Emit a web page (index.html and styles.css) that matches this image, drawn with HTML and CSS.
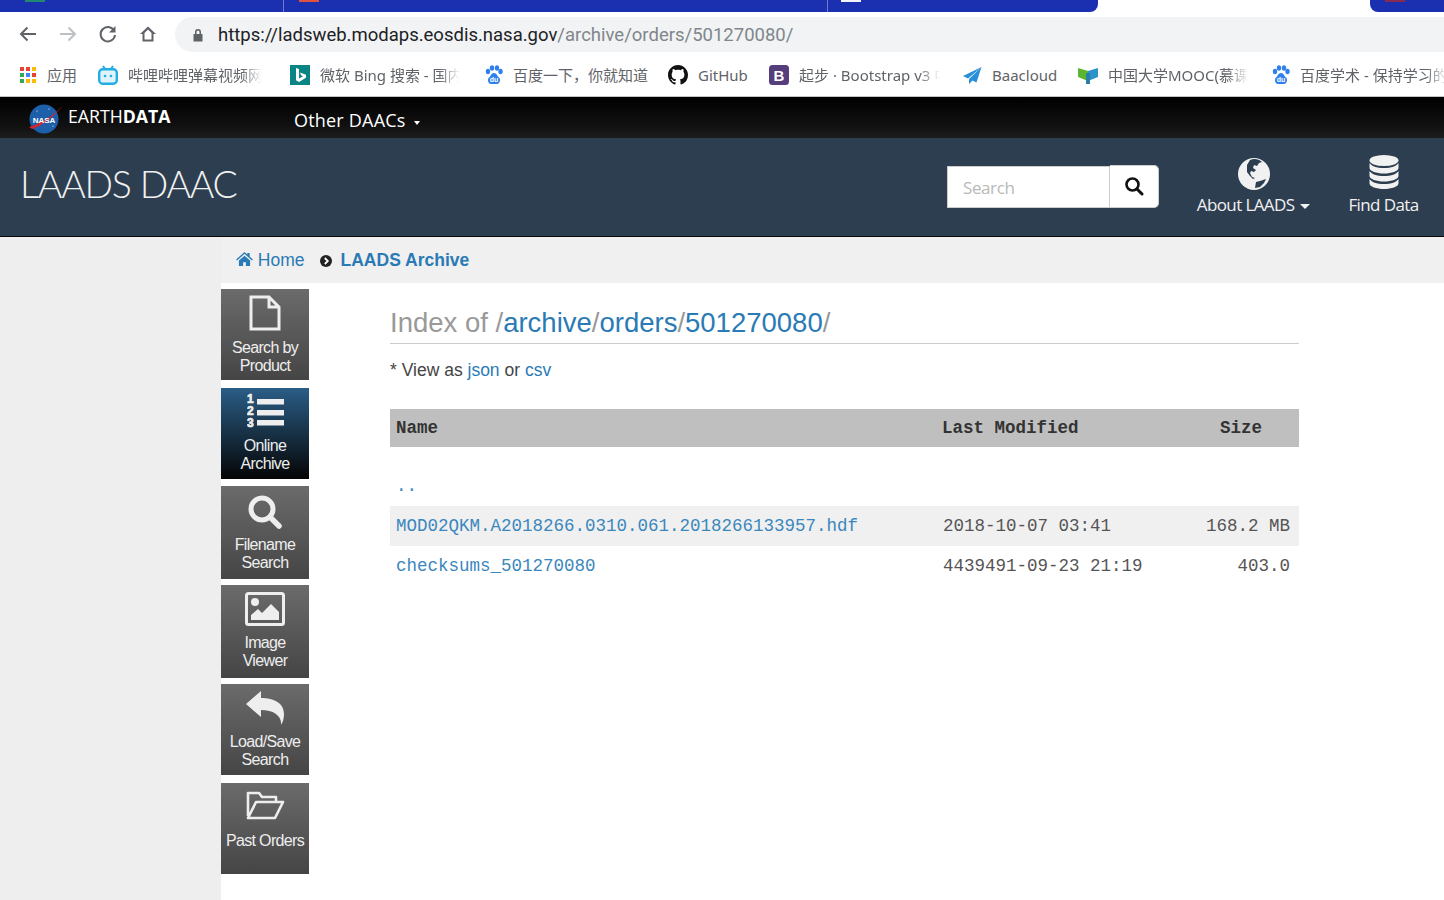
FILE: index.html
```html
<!DOCTYPE html>
<html lang="en">
<head>
<meta charset="utf-8">
<title>LAADS DAAC</title>
<link rel="stylesheet" href="styles.css">
</head>
<body>
<div class="browser">
  <div class="tabstrip">
    <div class="tabs">
      <div class="tab tab-a"><i class="fav fav-green"></i></div>
      <div class="tab tab-b"><i class="fav fav-red"></i></div>
      <div class="tab tab-c"><i class="fav fav-white"></i></div>
    </div>
    <div class="tab-active"></div>
    <div class="tabs-right"><i class="fav fav-maroon"></i></div>
  </div>
  <div class="toolbar">
    <svg class="tool" viewBox="0 0 20 20"><path d="M18 10H3M9.500 3.500 3 10l6.500 6.500" fill="none" stroke="#5f6368" stroke-width="2"/></svg>
    <svg class="tool" viewBox="0 0 20 20"><path d="M2 10h15M10.500 3.500 17 10l-6.500 6.500" fill="none" stroke="#bdc1c6" stroke-width="2"/></svg>
    <svg class="tool" viewBox="0 0 20 20"><path d="M16 6.500A7.200 7.200 0 1 0 17 11" fill="none" stroke="#5f6368" stroke-width="2"/><path d="M17.500 2v6.500H11z" fill="#5f6368"/></svg>
    <svg class="tool tool-last" viewBox="0 0 20 20"><path d="M10 2.500 2 10h2.500v7.500h11V10H18zM6.500 15.500V9L10 5.500 13.500 9v6.500z" fill="#5f6368"/></svg>
    <div class="omnibox">
      <svg class="lock" viewBox="0 0 12 14"><path d="M3 6V4a3 3 0 0 1 6 0v2h1.500v7.500h-9V6zm1.500 0h3V4a1.500 1.500 0 0 0-3 0z" fill="#5f6368"/></svg>
      <span class="url"><span class="url-host">https://ladsweb.modaps.eosdis.nasa.gov</span>/archive/orders/501270080/</span>
    </div>
  </div>
  <div class="bookmarks">
    <a class="bm bm-apps"><svg class="bm-icon" viewBox="0 0 16 16"><g><rect x="0" y="0" width="4" height="4" fill="#ea4335"/><rect x="6" y="0" width="4" height="4" fill="#ea4335"/><rect x="12" y="0" width="4" height="4" fill="#fbbc05"/><rect x="0" y="6" width="4" height="4" fill="#34a853"/><rect x="6" y="6" width="4" height="4" fill="#4285f4"/><rect x="12" y="6" width="4" height="4" fill="#ea4335"/><rect x="0" y="12" width="4" height="4" fill="#34a853"/><rect x="6" y="12" width="4" height="4" fill="#fbbc05"/><rect x="12" y="12" width="4" height="4" fill="#fbbc05"/></g></svg><span class="bm-text">应用</span></a>
    <a class="bm bm-bili"><svg class="bm-icon" viewBox="0 0 20 20"><path d="M5 1l2.500 3.500M15 1l-2.500 3.500" stroke="#23ade5" stroke-width="2"/><rect x="1.200" y="4.200" width="17.600" height="14.600" rx="3.500" fill="#dff3fb" stroke="#23ade5" stroke-width="2.400"/><circle cx="7" cy="11" r="1.300" fill="#23ade5"/><circle cx="13" cy="11" r="1.300" fill="#23ade5"/></svg><span class="bm-text bm-fade">哔哩哔哩弹幕视频网</span></a>
    <a class="bm bm-bing"><svg class="bm-icon" viewBox="0 0 20 20"><rect width="20" height="20" fill="#0b8484"/><path d="M6 3l3 1v9.500l4-2.300-2-1-1-2.700 6 2.200v3L9 17l-3-1.700z" fill="#fff"/></svg><span class="bm-text bm-fade">微软 Bing 搜索 - 国内</span></a>
    <a class="bm bm-baidu1"><svg class="bm-icon bm-icon-paw" viewBox="0 0 20 20"><use href="#paw"/><text x="10" y="16.500" class="du">du</text></svg><span class="bm-text">百度一下，你就知道</span></a>
    <a class="bm bm-gh"><svg class="bm-icon" viewBox="0 0 16 16"><path fill-rule="evenodd" fill="#111" d="M8 0C3.580 0 0 3.580 0 8c0 3.540 2.290 6.530 5.470 7.590.4.070.55-.17.55-.38 0-.19-.01-.82-.01-1.490-2.010.37-2.530-.49-2.690-.94-.09-.23-.48-.94-.82-1.130-.28-.15-.68-.52-.01-.53.630-.01 1.080.58 1.230.82.720 1.210 1.870.87 2.330.66.070-.52.280-.87.510-1.070-1.780-.2-3.640-.89-3.640-3.950 0-.87.310-1.590.82-2.150-.08-.2-.36-1.020.08-2.120 0 0 .67-.21 2.200.82.640-.18 1.320-.27 2-.27s1.360.09 2 .27c1.530-1.040 2.200-.82 2.200-.82.44 1.100.16 1.920.08 2.120.51.560.82 1.270.82 2.150 0 3.070-1.870 3.750-3.650 3.950.29.250.54.730.54 1.480 0 1.070-.01 1.930-.01 2.200 0 .21.150.46.550.38A8.010 8.010 0 0 0 16 8c0-4.420-3.580-8-8-8z"/></svg><span class="bm-text">GitHub</span></a>
    <a class="bm bm-bs"><svg class="bm-icon" viewBox="0 0 20 20"><rect width="20" height="20" rx="3.500" fill="#563d7c"/><text x="10" y="15.500" class="bs-letter">B</text></svg><span class="bm-text bm-fade">起步 · Bootstrap v3 中</span></a>
    <a class="bm bm-baa"><svg class="bm-icon" viewBox="0 0 20 20"><path d="M19.500 2 1 11l5 2.500zM19.500 2 7 14v5l3.500-3.500 4 2z" fill="#2a8fd8"/></svg><span class="bm-text">Baacloud</span></a>
    <a class="bm bm-mooc"><svg class="bm-icon" viewBox="0 0 20 20"><path d="M0 3l10 3v10L0 12z" fill="#5cb531"/><path d="M10 6l10-3v9l-10 4z" fill="#2a93c9"/><path d="M8 8h4v11H8z" fill="#2a7fa9"/></svg><span class="bm-text bm-fade">中国大学MOOC(慕课)</span></a>
    <a class="bm bm-baidu2"><svg class="bm-icon bm-icon-paw" viewBox="0 0 20 20"><use href="#paw"/><text x="10" y="16.500" class="du">du</text></svg><span class="bm-text bm-fade">百度学术 - 保持学习的</span></a>
  </div>
</div>

<svg class="defs" width="0" height="0"><defs><g id="paw" fill="#2f80ed"><ellipse cx="4" cy="6.500" rx="2.200" ry="2.800"/><ellipse cx="8" cy="3" rx="2.200" ry="2.800"/><ellipse cx="13" cy="3" rx="2.200" ry="2.800"/><ellipse cx="16.500" cy="6.500" rx="2.200" ry="2.800"/><path d="M10 8c3 0 3 3 5 4.500s1 6.500-2 6.500H7c-3 0-4-5-2-6.500S7 8 10 8z"/></g></defs></svg>

<div class="earthbar">
  <div class="brand">
    <svg class="nasa" viewBox="0 0 36 32"><circle cx="16" cy="17" r="14.500" fill="#1d5fa8"/><path d="M1 25C12 22 26 14 35 3 28 13 14 24 4 27z" fill="#d8232a"/><text x="16" y="20.500" class="nasa-word">NASA</text><circle cx="9" cy="9" r=".6" fill="#fff"/><circle cx="21" cy="7" r=".6" fill="#fff"/><circle cx="25" cy="24" r=".6" fill="#fff"/></svg>
    <span class="brand-word">EARTH<b>DATA</b></span>
  </div>
  <div class="daacs">Other DAACs <span class="daacs-caret"></span></div>
</div>

<header class="site">
  <div class="site-title">LAADS DAAC</div>
  <div class="site-tools">
    <div class="searchbox">
      <div class="search-input">Search</div>
      <div class="search-btn"><svg viewBox="0 0 20 20"><circle cx="8.500" cy="8.500" r="6" fill="none" stroke="#111" stroke-width="2.600"/><path d="M13 13l5 5" stroke="#111" stroke-width="3" stroke-linecap="round"/></svg></div>
    </div>
    <div class="site-link link-about">
      <svg class="site-icon" viewBox="0 0 34 34"><circle cx="17" cy="17" r="16" fill="#f1f1f1"/><path d="M13 3c4-2 9-1 12 2l-3 1-2 3-3-1-1 3 3 2-2 2-3-1-1 2 2 4 3 1-2 1-3-3-3-4V8zM19 25l4-1 6-2-2 4-4 4-5 1z" fill="#2d3e50"/></svg>
      <span class="site-label">About LAADS <span class="caret"></span></span>
    </div>
    <div class="site-link link-find">
      <svg class="site-icon" viewBox="0 0 30 34"><g fill="#f1f1f1"><ellipse cx="15" cy="5.500" rx="14.500" ry="5.500"/><path d="M.5 8c2 3 7 5 14.500 5s12.500-2 14.500-5v5c0 3-7 5.500-14.500 5.500S.5 16 .5 13z"/><path d="M.5 16c2 3 7 5 14.500 5s12.500-2 14.500-5v5c0 3-7 5.500-14.500 5.500S.5 24 .5 21z"/><path d="M.5 24c2 3 7 5 14.500 5s12.500-2 14.500-5v4.500c0 3-7 5.500-14.500 5.500S.5 31.500.5 28.500z"/></g></svg>
      <span class="site-label">Find Data</span>
    </div>
  </div>
</header>

<div class="page">
  <aside class="gutter"></aside>
  <div class="main">
    <nav class="crumbs">
      <a class="crumb-home"><svg class="home-ic" viewBox="0 0 18 15"><path d="M9 0l3 2.600V1h2.500v3.800L18 8l-1 1-8-7-8 7-1-1zM3 9l6-5 6 5v6h-4.500v-4h-3v4H3z" fill="#2a7ab5"/></svg> Home</a>
      <svg class="chev" viewBox="0 0 12 12"><circle cx="6" cy="6" r="6" fill="#222"/><path d="M4.800 3l3 3-3 3" fill="none" stroke="#fff" stroke-width="1.800"/></svg>
      <a class="crumb-cur">LAADS Archive</a>
    </nav>
    <div class="body-row">
      <div class="sidenav">
        <a class="navbtn h91 gap8">
          <svg class="nav-ic ic-file" viewBox="0 0 32 36"><path d="M2 2h18l10 10v22H2zM20 2v10h10" fill="none" stroke="#eee" stroke-width="3"/></svg>
          <span>Search by<br>Product</span>
        </a>
        <a class="navbtn active h91 gap7">
          <svg class="nav-ic ic-list" viewBox="0 0 37 36"><g fill="#eee"><rect x="10" y="7" width="27" height="5.500"/><rect x="10" y="18" width="27" height="5.500"/><rect x="10" y="28" width="27" height="5.500"/></g><text x="0" y="11" class="ol-num">1</text><text x="0" y="23" class="ol-num">2</text><text x="0" y="35" class="ol-num">3</text></svg>
          <span>Online<br>Archive</span>
        </a>
        <a class="navbtn h93 gap6">
          <svg class="nav-ic ic-search" viewBox="0 0 34 34"><circle cx="14" cy="14" r="11" fill="none" stroke="#eee" stroke-width="5"/><path d="M22 22l9 9" stroke="#eee" stroke-width="5.500" stroke-linecap="round"/></svg>
          <span>Filename<br>Search</span>
        </a>
        <a class="navbtn h93 gap6">
          <svg class="nav-ic ic-image" viewBox="0 0 40 34"><rect x="1.500" y="1.500" width="37" height="31" rx="2" fill="none" stroke="#eee" stroke-width="3"/><circle cx="10" cy="10" r="4" fill="#eee"/><path d="M6 28v-5l7-6 4 4 9-9 8 8v8z" fill="#eee"/></svg>
          <span>Image<br>Viewer</span>
        </a>
        <a class="navbtn h91 gap8">
          <svg class="nav-ic ic-reply" viewBox="0 0 38 34"><path d="M0 13 15 0v7c13 0 23 5 23 16 0 4-1 8-3 11 1-9-7-15-20-15v7z" fill="#eee"/></svg>
          <span>Load/Save<br>Search</span>
        </a>
        <a class="navbtn h91">
          <svg class="nav-ic ic-folder" viewBox="0 0 40 30"><path d="M3 26V3h11l3 4h14v5M3 28h27l8-16H11L3 28z" fill="none" stroke="#eee" stroke-width="2.600" stroke-linejoin="round"/></svg>
          <span>Past Orders</span>
        </a>
      </div>
      <main class="content">
        <h1 class="index-title">Index of /<a>archive</a>/<a>orders</a>/<a>501270080</a>/</h1>
        <p class="view-as">* View as <a>json</a> or <a>csv</a></p>
        <table class="files">
          <thead><tr><th class="c-name">Name</th><th class="c-mod">Last Modified</th><th class="c-size">Size</th></tr></thead>
          <tbody>
            <tr class="row-up"><td class="c-name"><a>..</a></td><td></td><td></td></tr>
            <tr class="row-alt"><td class="c-name"><a>MOD02QKM.A2018266.0310.061.2018266133957.hdf</a></td><td class="c-mod">2018-10-07 03:41</td><td class="c-size">168.2 MB</td></tr>
            <tr><td class="c-name"><a>checksums_501270080</a></td><td class="c-mod">4439491-09-23 21:19</td><td class="c-size">403.0</td></tr>
          </tbody>
        </table>
      </main>
    </div>
  </div>
</div>
</body>
</html>
```

FILE: styles.css
```css
* { box-sizing: border-box; }
html, body { margin: 0; padding: 0; height: 100%; overflow: hidden; background: #fff; }
body { font-family: "Liberation Sans", Arial, sans-serif; }
a { color: #2a7ab5; text-decoration: none; }
.defs { display: block; height: 0; }

/* Browser chrome */
.tabstrip { display: flex; height: 12px; overflow: hidden; }
.tabs { width: 1098px; background: #1a30b0; border-bottom-right-radius: 8px; display: flex; }
.tab { height: 12px; }
.tab-a { width: 284px; border-right: 1px solid #6f7bc8; }
.tab-b { width: 544px; border-right: 1px solid #6f7bc8; }
.tab-c { flex: 1; }
.tab-active { width: 272px; background: #fff; }
.tabs-right { flex: 1; background: #1a30b0; border-bottom-left-radius: 8px; padding-left: 15px; }
.fav { display: block; width: 20px; height: 2px; }
.fav-green { background: #1f8a70; margin-left: 25px; }
.fav-red { background: #e0523f; margin-left: 15px; }
.fav-white { background: #f3f3f8; margin-left: 13px; }
.fav-maroon { background: #8a2a52; }

.toolbar { display: flex; align-items: flex-start; height: 40px; padding-top: 5px; padding-left: 18px; background: #fff; }
.tool { width: 20px; height: 20px; margin-top: 7px; margin-right: 20px; flex: none; }
.tool-last { margin-right: 17px; }
.omnibox { flex: 1; height: 35px; background: #f1f3f4; border-radius: 17.500px 0 0 17.500px; display: flex; align-items: center; padding-left: 17px; }
.lock { width: 12px; height: 14px; margin-right: 14px; flex: none; }
.url { font-family: "Roboto", sans-serif; font-size: 18.500px; color: #80868b; white-space: nowrap; }
.url-host { color: #202124; }

.bookmarks { display: flex; height: 45px; align-items: center; background: #fff; border-bottom: 1px solid #c4c4c4; overflow: hidden; padding-left: 20px; padding-top: 1px; }
.bm { display: flex; align-items: center; flex: none; }
.bm-icon { width: 20px; height: 20px; flex: none; margin-right: 10px; }
.bm-apps .bm-icon { width: 16px; height: 16px; margin-right: 11px; }
.bm-text { font-family: "Noto Sans", "Noto Sans CJK SC", sans-serif; font-size: 15px; color: #5f6368; white-space: nowrap; overflow: hidden; }
.bm-fade { -webkit-mask-image: linear-gradient(to right, #000 85%, transparent); mask-image: linear-gradient(to right, #000 85%, transparent); }
.bm-apps { width: 78px; }
.bm-bili { width: 192px; }
.bm-bili .bm-text { width: 134px; }
.bm-bing { width: 194px; }
.bm-bing .bm-text { width: 140px; }
.bm-baidu1 { width: 184px; }
.bm-baidu1 .bm-icon { margin-right: 9px; }
.bm-gh { width: 101px; }
.bm-bs { width: 193px; }
.bm-bs .bm-text { width: 141px; }
.bm-baa { width: 116px; }
.bm-mooc { width: 193px; }
.bm-mooc .bm-text { width: 140px; }
.bm-baidu2 { flex: 1; }
.bm-baidu2 .bm-icon { margin-right: 9px; }
.bs-letter { font: 700 15px "Liberation Sans", sans-serif; fill: #fff; text-anchor: middle; }
.du { font: 700 7px "Liberation Sans", sans-serif; fill: #fff; text-anchor: middle; }

/* Earthdata bar */
.earthbar { height: 41px; display: flex; background: linear-gradient(#000 0%, #111 70%, #1d1d1d 100%); color: #fff; }
.brand { width: 294px; display: flex; align-items: flex-start; padding-left: 28px; padding-top: 5px; }
.nasa { width: 36px; height: 32px; margin-right: 4px; }
.nasa-word { font: 700 8px "Liberation Sans", sans-serif; fill: #fff; text-anchor: middle; }
.brand-word { font-family: "Open Sans", sans-serif; font-size: 17.700px; line-height: 29px; }
.daacs { font-family: "Open Sans", sans-serif; font-size: 18px; line-height: 46px; letter-spacing: .2px; }
.daacs-caret { display: inline-block; width: 0; height: 0; border: 3px solid transparent; border-top: 4px solid #fff; border-bottom: 0; margin-left: 4px; vertical-align: 2px; }

/* Site header */
.site { height: 99px; background: #2d3e50; border-bottom: 1px solid #0a0a0a; display: flex; justify-content: space-between; align-items: flex-start; padding-left: 20px; }
.site-title { font-family: "Lato", sans-serif; font-weight: 300; font-size: 37.500px; line-height: 48px; margin-top: 22px; color: #f1f1f1; letter-spacing: -1.200px; }
.site-tools { display: flex; align-items: flex-start; }
.searchbox { display: flex; width: 212px; height: 43px; margin-top: 27px; margin-right: 37px; }
.search-input { width: 163px; height: 42px; margin-top: 1px; background: #fff; border: 1px solid #ccc; font-family: "Open Sans", sans-serif; font-size: 17px; line-height: 42px; padding-left: 15px; color: #b9b9b9; letter-spacing: -0.400px; }
.search-btn { flex: 1; background: #fff; border: 1px solid #ccc; border-left: 0; border-radius: 0 5px 5px 0; display: flex; align-items: center; justify-content: center; }
.search-btn svg { width: 20px; height: 20px; margin-bottom: 2px; }
.site-link { display: flex; flex-direction: column; align-items: center; color: #f1f1f1; }
.link-about { width: 114px; margin-right: 38px; padding-top: 19px; padding-left: 1px; }
.link-about .site-icon { width: 34px; height: 34px; }
.link-find { width: 71px; margin-right: 25px; padding-top: 17px; }
.link-find .site-icon { width: 30px; height: 34px; margin-bottom: 2px; }
.site-label { font-family: "Open Sans", sans-serif; font-size: 17px; line-height: 24px; margin-top: 2px; white-space: nowrap; letter-spacing: -0.600px; }
.caret { display: inline-block; width: 0; height: 0; border: 5px solid transparent; border-top: 5px solid #f1f1f1; border-bottom: 0; margin-left: 2px; vertical-align: 2px; }

/* Page */
.page { display: flex; height: 663px; }
.gutter { width: 221px; background: #eee; flex: none; }
.main { flex: 1; display: flex; flex-direction: column; }
.crumbs { height: 46px; background: #f0f0f0; display: flex; align-items: center; padding-left: 15px; font-size: 17.500px; }
.home-ic { width: 17px; height: 14px; }
.chev { width: 12px; height: 12px; margin-left: 15px; margin-right: 9px; margin-top: 2px; }
.crumb-cur { font-weight: 700; }
.body-row { display: flex; flex: 1; padding-top: 6px; }
.sidenav { width: 88px; flex: none; display: flex; flex-direction: column; }
.navbtn { display: flex; flex-direction: column; align-items: center; width: 88px; padding-top: 6px; background: linear-gradient(#6b6b6b, #454545); color: #eee; font-size: 16px; line-height: 18px; text-align: center; letter-spacing: -0.650px; }
.navbtn.active { background: linear-gradient(#2a5d86, #050505); }
.h91 { height: 91px; }
.h93 { height: 93px; }
.gap8 { margin-bottom: 8px; }
.gap7 { margin-bottom: 7px; }
.gap6 { margin-bottom: 6px; }
.nav-ic { flex: none; display: block; }
.ic-file { width: 32px; height: 36px; margin-bottom: 8px; }
.ic-list { width: 37px; height: 36px; margin-top: -2px; margin-bottom: 9px; }
.ic-search { width: 34px; height: 34px; margin-top: 3px; margin-bottom: 7px; }
.ic-image { width: 40px; height: 34px; margin-top: 1px; margin-bottom: 8px; }
.ic-reply { width: 38px; height: 34px; margin-top: 1px; margin-bottom: 8px; }
.ic-folder { width: 40px; height: 30px; margin-top: 1px; margin-bottom: 12px; }
.ol-num { font: 700 12px "Liberation Sans", sans-serif; fill: #eee; stroke: #eee; stroke-width: .7px; }

.content { width: 909px; margin-left: 81px; }
.index-title { margin: 0; height: 55px; font-size: 27.500px; font-weight: 400; line-height: 38px; padding-top: 15px; color: #999; border-bottom: 1px solid #ccc; }
.view-as { margin: 14px 0 0; font-size: 17.500px; line-height: 24px; color: #444; height: 51px; }
.files { width: 909px; border-collapse: collapse; table-layout: fixed; font-family: "Liberation Mono", "Courier New", monospace; font-size: 17.500px; color: #555; }
.files a { color: #3b87bd; }
.files th { background: #bfbfbf; height: 38px; text-align: left; font-weight: 700; color: #333; padding: 0; }
.files td { height: 40px; padding: 0; white-space: nowrap; }
.files .row-up td { height: 59px; padding-top: 19px; }
.row-alt td { background: #f0f0f0; }
.c-name { width: 552px; padding-left: 6px !important; }
.c-mod { width: 252px; }
.c-size { width: 105px; }
th.c-size { padding-left: 26px !important; }
td.c-mod { padding-left: 1px; }
td.c-size { text-align: right; padding-right: 9px !important; }
```
